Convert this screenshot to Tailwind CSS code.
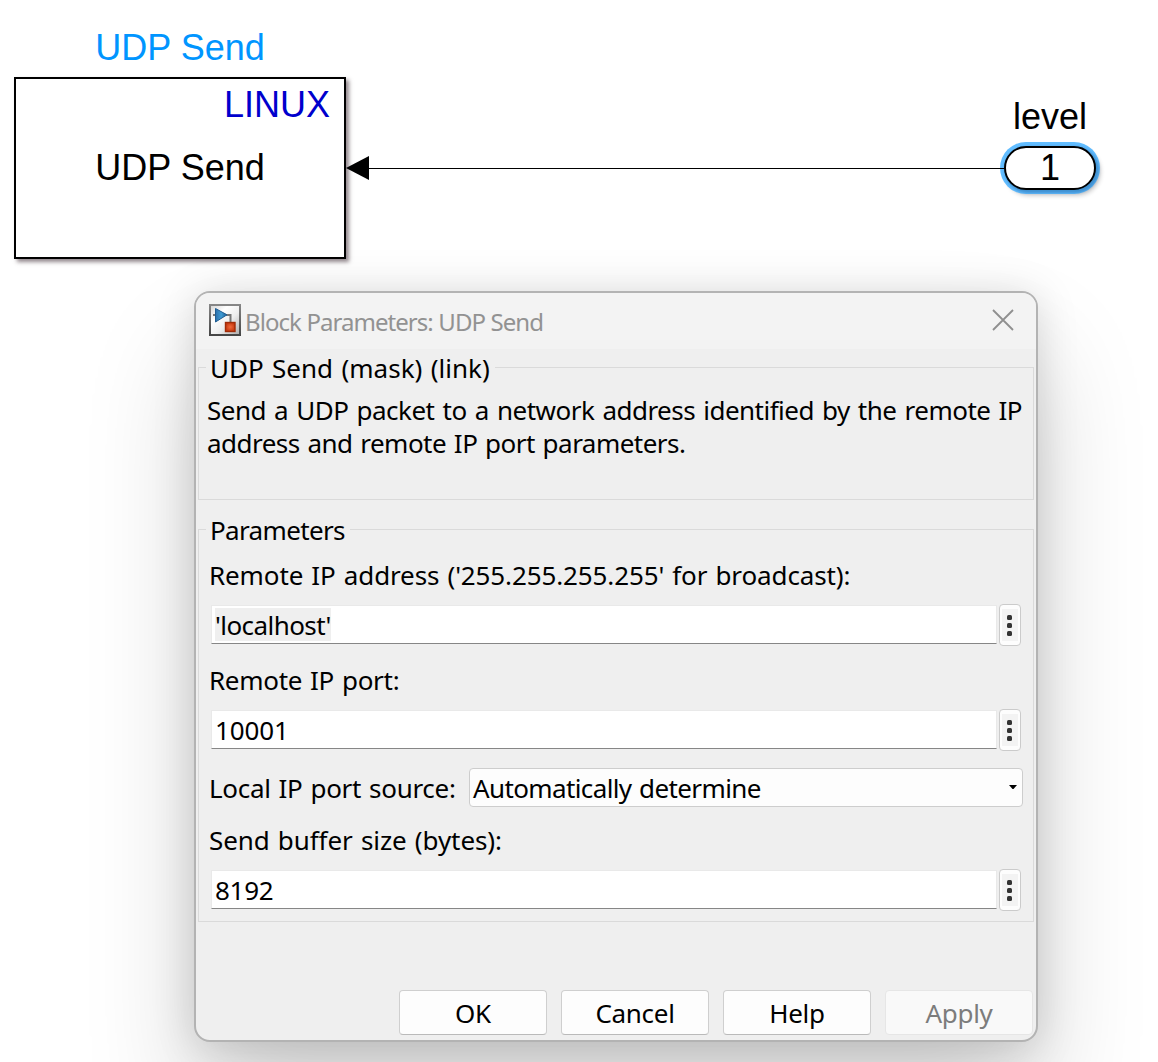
<!DOCTYPE html>
<html lang="en">
<head>
<meta charset="utf-8">
<title>Block Parameters: UDP Send</title>
<script src="https://cdn.jsdelivr.net/npm/@tailwindcss/browser@4"></script>
</head>
<body class="bg-white">
<main class="relative w-[1158px] h-[1062px] overflow-hidden bg-white text-black">

  <!-- Model canvas -->
  <div class="font-['Liberation_Sans',sans-serif] text-[36px] leading-[36px] whitespace-nowrap">
    <div class="absolute left-[14px] top-[30px] w-[332px] text-center text-[#0095ff]">UDP Send</div>
    <div class="absolute left-[14px] top-[77px] w-[332px] h-[182px] border-2 border-black bg-white shadow-[3px_3px_4px_rgba(40,20,30,0.5)]">
      <div class="pt-[8px] pr-[14px] text-right text-[#0000cd]">LINUX</div>
      <div class="pt-[27px] text-center">UDP Send</div>
    </div>
    <div class="absolute left-[1003px] top-[99px] w-[94px] text-center">level</div>
    <div class="absolute left-[1004px] top-[146px] w-[92px] h-[44px] rounded-full border-2 border-black bg-white text-center pt-[2px] shadow-[2px_2px_3px_1px_rgba(0,60,120,0.35),0_0_0_4px_#62bdff,3px_4px_4px_2px_rgba(0,0,0,0.18)]">1</div>
    <svg class="absolute left-[346px] top-[150px]" width="660" height="36" viewBox="0 0 660 36">
      <path d="M20 18.5H659" stroke="#000" stroke-width="1"/>
      <path d="M0 18L23 6V30Z" fill="#000"/>
    </svg>
  </div>

  <!-- Dialog -->
  <section class="absolute left-[194px] top-[291px] w-[844px] h-[751px] rounded-[16px] border-2 border-[#b3b3b3] bg-[#efefef] shadow-[0_64px_108px_rgba(0,0,0,0.18),0_4px_42px_rgba(0,0,0,0.147)] font-['Noto_Sans',sans-serif] text-[26px] leading-[34px] tracking-[-0.3px] [word-spacing:1.5px] whitespace-nowrap">
    <header class="flex h-[56px] items-start rounded-t-[14px] bg-[#f3f3f3] pt-[11px] pl-[13px] pr-[22px]">
      <svg width="32" height="32" viewBox="0 0 32 32">
        <defs>
          <linearGradient id="f" x1="0" y1="0" x2="0" y2="1"><stop offset="0" stop-color="#888"/><stop offset="1" stop-color="#444"/></linearGradient>
          <linearGradient id="g" x1="0" y1="0" x2="1" y2="1"><stop offset="0" stop-color="#d8d8d8"/><stop offset=".3" stop-color="#fff"/><stop offset=".6" stop-color="#eee"/><stop offset="1" stop-color="#b0b0b0"/></linearGradient>
          <linearGradient id="b" x1="0" y1="0" x2="1" y2="0"><stop offset="0" stop-color="#2b6ea8"/><stop offset=".5" stop-color="#3f9bd4"/><stop offset="1" stop-color="#1d5c90"/></linearGradient>
          <radialGradient id="r"><stop offset="0" stop-color="#f06a3c"/><stop offset="1" stop-color="#c83a10"/></radialGradient>
        </defs>
        <rect width="32" height="32" fill="url(#f)"/>
        <rect x="2" y="2" width="28" height="28" fill="url(#g)"/>
        <path d="M4 11H7M17 11H21.5V18" fill="none" stroke="#777" stroke-width="2"/>
        <path d="M6.5 4.5L18 10.8L6.5 18Z" fill="url(#b)" stroke="#1f5d92" stroke-width="1"/>
        <rect x="16.5" y="18.5" width="9.5" height="9" fill="url(#r)" stroke="#a02c08" stroke-width="1.4"/>
      </svg>
      <h1 class="ml-[4px] pt-px text-[24px] leading-[34px] tracking-[-0.95px] [word-spacing:0.2px] text-[#929292]">Block Parameters: UDP Send</h1>
      <svg class="ml-auto mt-[5px]" width="22" height="22" viewBox="0 0 22 22"><path d="M1 1L21 21M21 1L1 21" stroke="#8f8f8f" stroke-width="1.8"/></svg>
    </header>

    <div class="flex flex-col px-[2px]">
      <fieldset class="mt-[1px] h-[150px] min-w-0 border border-[#dadada] pl-[8px]">
        <legend class="-ml-px h-[34px] pl-[4px] pr-[5px] pt-px tracking-[0.02px]">UDP Send (mask) (link)</legend>
        <p class="mt-[10px] leading-[33px] tracking-[-0.52px]"><span class="[word-spacing:1.9px]">Send a UDP packet to a network address identified by the remote IP</span><br>address and remote IP port parameters.</p>
      </fieldset>

      <fieldset class="mt-[12px] h-[410px] min-w-0 border border-[#dadada] px-[10px]">
        <legend class="ml-[-3px] h-[34px] pl-[4px] pr-[5px] pt-px tracking-[-0.65px]">Parameters</legend>
        <label class="mt-[12px] block tracking-[-0.12px]">Remote IP address ('255.255.255.255' for broadcast):</label>
        <div class="mt-[12px] flex h-[42px] items-start pl-[2px]">
          <div class="mt-px flex h-[39px] w-[786px] items-center border border-[#e9e9e9] border-b-[#868686] bg-white pl-[3px]"><span class="h-[33px] bg-[#efefef] leading-[35px] tracking-[-0.57px]">'localhost'</span></div>
          <button class="ml-[2px] flex h-[42px] w-[22px] items-center rounded-[4px] border border-[#cbcbcb] bg-[#fdfdfd] pl-[2px]"><span class="flex h-[32px] w-[16px] flex-col items-start justify-center gap-[3px] bg-[#f3f3f3] pl-[5px]"><i class="size-[5px] rounded-[1.5px] bg-[#333]"></i><i class="size-[5px] rounded-[1.5px] bg-[#333]"></i><i class="size-[5px] rounded-[1.5px] bg-[#333]"></i></span></button>
        </div>
        <label class="mt-[17px] block">Remote IP port:</label>
        <div class="mt-[12px] flex h-[42px] items-start pl-[2px]">
          <div class="mt-px flex h-[39px] w-[786px] items-center border border-[#e9e9e9] border-b-[#868686] bg-white pl-[3px] tracking-[-0.15px]">10001</div>
          <button class="ml-[2px] flex h-[42px] w-[22px] items-center rounded-[4px] border border-[#cbcbcb] bg-[#fdfdfd] pl-[2px]"><span class="flex h-[32px] w-[16px] flex-col items-start justify-center gap-[3px] bg-[#f3f3f3] pl-[5px]"><i class="size-[5px] rounded-[1.5px] bg-[#333]"></i><i class="size-[5px] rounded-[1.5px] bg-[#333]"></i><i class="size-[5px] rounded-[1.5px] bg-[#333]"></i></span></button>
        </div>
        <div class="mt-[17px] flex h-[39px] items-center">
          <label class="w-[260px]">Local IP port source:</label>
          <div class="flex h-[39px] w-[554px] items-center justify-between rounded-[4px] border border-[#cdcdcd] bg-[#fdfdfd] pl-[3px] pr-[5px] tracking-[-0.62px]">Automatically determine
            <svg class="-mt-px" width="8" height="4" viewBox="0 0 8 4"><path d="M0 0H8L4.5 4H3.5Z" fill="#000"/></svg>
          </div>
        </div>
        <label class="mt-[16px] block tracking-[-0.08px]">Send buffer size (bytes):</label>
        <div class="mt-[12px] flex h-[42px] items-start pl-[2px]">
          <div class="mt-px flex h-[39px] w-[786px] items-center border border-[#e9e9e9] border-b-[#868686] bg-white pl-[3px]">8192</div>
          <button class="ml-[2px] flex h-[42px] w-[22px] items-center rounded-[4px] border border-[#cbcbcb] bg-[#fdfdfd] pl-[2px]"><span class="flex h-[32px] w-[16px] flex-col items-start justify-center gap-[3px] bg-[#f3f3f3] pl-[5px]"><i class="size-[5px] rounded-[1.5px] bg-[#333]"></i><i class="size-[5px] rounded-[1.5px] bg-[#333]"></i><i class="size-[5px] rounded-[1.5px] bg-[#333]"></i></span></button>
        </div>
      </fieldset>

      <footer class="mt-[68px] flex justify-end gap-[14px] pr-px">
        <button class="h-[45px] w-[148px] rounded-[4px] border border-[#cfcfcf] border-b-[#bababa] bg-[#fdfdfd]">OK</button>
        <button class="h-[45px] w-[148px] rounded-[4px] border border-[#cfcfcf] border-b-[#bababa] bg-[#fdfdfd]">Cancel</button>
        <button class="h-[45px] w-[148px] rounded-[4px] border border-[#cfcfcf] border-b-[#bababa] bg-[#fdfdfd]">Help</button>
        <button class="h-[45px] w-[148px] rounded-[4px] border border-[#e6e6e6] bg-[#f9f9f9] text-[#7c7c7c]">Apply</button>
      </footer>
    </div>
  </section>
</main>
</body>
</html>
